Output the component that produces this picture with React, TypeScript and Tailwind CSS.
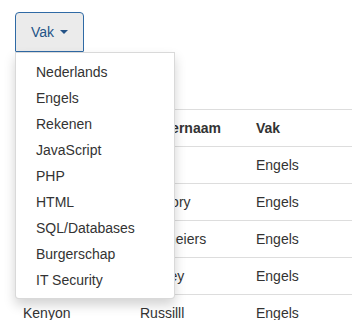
const vakken = ['Nederlands', 'Engels', 'Rekenen', 'JavaScript', 'PHP', 'HTML', 'SQL/Databases', 'Burgerschap', 'IT Security'];

const rows = [
  { voornaam: 'Dana', achternaam: 'Hart', vak: 'Engels' },
  { voornaam: 'Milo', achternaam: 'Gregory', vak: 'Engels' },
  { voornaam: 'Fenna', achternaam: 'Schmeiers', vak: 'Engels' },
  { voornaam: 'Joris', achternaam: 'Harvey', vak: 'Engels' },
  { voornaam: 'Kenyon', achternaam: 'Russilll', vak: 'Engels' },
];

export default function App() {
  return (
    <div className="w-[352px] h-[320px] overflow-hidden bg-white pl-[15px] pt-[12px] font-['Liberation_Sans',Arial,sans-serif] text-[14px] leading-[20px] text-[#333]">
      <div className="relative inline-block">
        <button className="flex items-center h-[40px] px-[15px] rounded-t-[4px] rounded-b-[1px] border border-[#2f6aa5] bg-[#ebebeb] text-[#245387]">
          <span>Vak</span>
          <span className="ml-[6px] w-0 h-0 border-l-[4px] border-r-[4px] border-t-[4px] border-l-transparent border-r-transparent border-t-[#245387]" />
        </button>

        <ul className="absolute left-0 top-full z-10 w-[160px] pt-[6px] pb-[5px] bg-white border border-[rgba(0,0,0,0.15)] rounded-b-[4px] shadow-[0_6px_12px_rgba(0,0,0,0.175)]">
          {vakken.map(v => (
            <li key={v} className="px-[20px] py-[3px] whitespace-nowrap text-[#333]">{v}</li>
          ))}
        </ul>
      </div>

      <table className="mt-[57px] w-[337px] border-collapse text-left">
        <thead>
          <tr className="border-t border-[#ddd]">
            <th className="w-[117px] p-[8px] font-bold">Voornaam</th>
            <th className="w-[116px] p-[8px] font-bold">Achternaam</th>
            <th className="p-[8px] font-bold">Vak</th>
          </tr>
        </thead>
        <tbody>
          {rows.map(r => (
            <tr key={r.voornaam} className="border-t border-[#ddd]">
              <td className="p-[8px]">{r.voornaam}</td>
              <td className="p-[8px]">{r.achternaam}</td>
              <td className="p-[8px]">{r.vak}</td>
            </tr>
          ))}
        </tbody>
      </table>
    </div>
  );
}
